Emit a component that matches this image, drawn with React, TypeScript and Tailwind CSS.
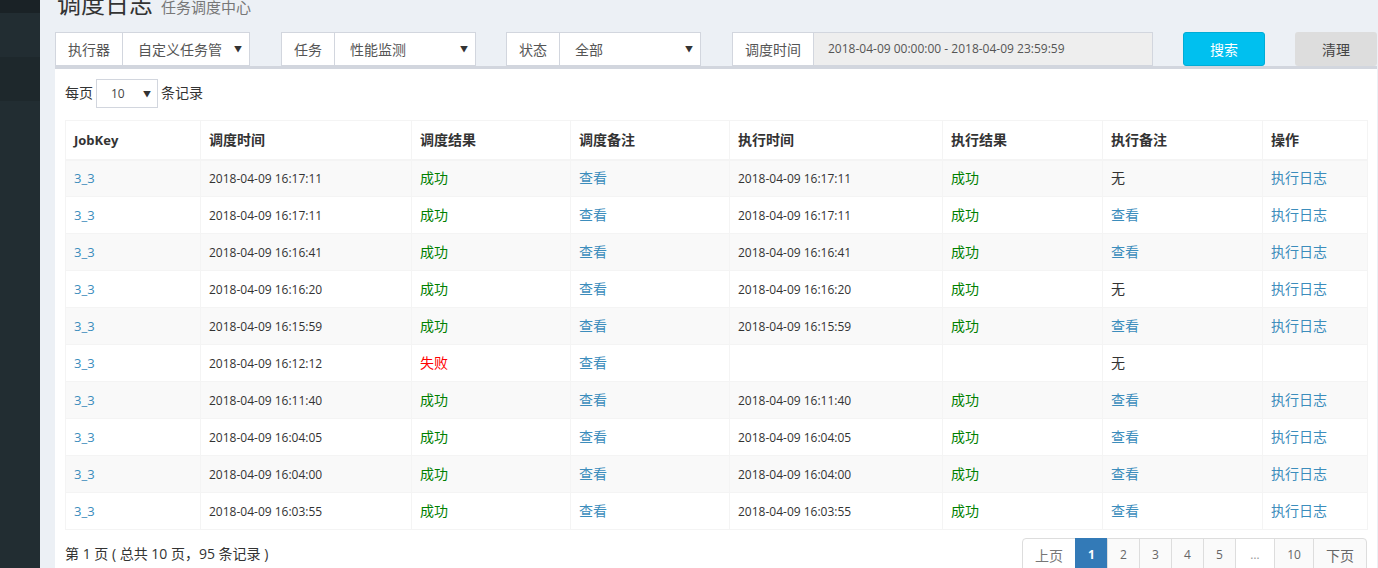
import React from 'react';

interface LogRow {
  triggerTime: string;
  ok: boolean;
  handleTime: string;
  handleOk: boolean;
  handleMsg: boolean;
}

const rows: LogRow[] = [
  { triggerTime: '2018-04-09 16:17:11', ok: true, handleTime: '2018-04-09 16:17:11', handleOk: true, handleMsg: false },
  { triggerTime: '2018-04-09 16:17:11', ok: true, handleTime: '2018-04-09 16:17:11', handleOk: true, handleMsg: true },
  { triggerTime: '2018-04-09 16:16:41', ok: true, handleTime: '2018-04-09 16:16:41', handleOk: true, handleMsg: true },
  { triggerTime: '2018-04-09 16:16:20', ok: true, handleTime: '2018-04-09 16:16:20', handleOk: true, handleMsg: false },
  { triggerTime: '2018-04-09 16:15:59', ok: true, handleTime: '2018-04-09 16:15:59', handleOk: true, handleMsg: true },
  { triggerTime: '2018-04-09 16:12:12', ok: false, handleTime: '', handleOk: false, handleMsg: false },
  { triggerTime: '2018-04-09 16:11:40', ok: true, handleTime: '2018-04-09 16:11:40', handleOk: true, handleMsg: true },
  { triggerTime: '2018-04-09 16:04:05', ok: true, handleTime: '2018-04-09 16:04:05', handleOk: true, handleMsg: true },
  { triggerTime: '2018-04-09 16:04:00', ok: true, handleTime: '2018-04-09 16:04:00', handleOk: true, handleMsg: true },
  { triggerTime: '2018-04-09 16:03:55', ok: true, handleTime: '2018-04-09 16:03:55', handleOk: true, handleMsg: true },
];

const Caret = () => <span className="text-[8px] leading-none text-[#333]">▼</span>;

const FilterSelect: React.FC<{ label: string; value: string; labelW: string; className?: string }> = ({ label, value, labelW, className }) => (
  <div className={`flex h-[34px] w-[195px] shrink-0 ${className ?? ''}`}>
    <div className={`flex ${labelW} shrink-0 items-center justify-center border border-[#d2d6de] bg-white text-[#555]`}>{label}</div>
    <div className="-ml-px flex flex-1 items-center justify-between border border-[#d2d6de] bg-white pl-[15px] pr-[7px] text-[#555]">
      <span>{value}</span>
      <Caret />
    </div>
  </div>
);

const th = 'h-[39px] border border-[#f4f4f4] border-b-2 px-2 py-0 text-left text-[14px] font-bold leading-5 text-[#333]';
const td = 'h-[37px] border border-[#f4f4f4] px-2 py-0 leading-5';
const num = 'text-[12px] text-[#333]';

const App: React.FC = () => {
  return (
    <div className="flex h-[568px] w-[1378px] overflow-hidden bg-[#ecf0f5] font-['Open_Sans','Noto_Sans_CJK_SC',sans-serif] text-[14px] text-[#333]">
      {/* sidebar */}
      <aside className="flex w-[40px] shrink-0 flex-col bg-[#222d32]">
        <div className="h-[13px] shrink-0 bg-[#1a2226]" />
        <div className="h-[44px] shrink-0" />
        <div className="h-[44px] shrink-0 bg-[#1e282c]" />
      </aside>

      <main className="flex min-w-0 flex-1 flex-col pl-[15px] pr-px">
        {/* header */}
        <div className="h-[32px] shrink-0">
          <h1 className="-mt-[8px] ml-[2px] flex items-baseline gap-[8px] leading-[24px]">
            <span className="text-[24px] text-[#333]">调度日志</span>
            <span className="text-[15px] text-[#777]">任务调度中心</span>
          </h1>
        </div>

        {/* filters */}
        <div className="flex h-[34px] shrink-0">
          <FilterSelect label="执行器" value="自定义任务管" labelW="w-[68px]" />
          <FilterSelect label="任务" value="性能监测" labelW="w-[54px]" className="ml-[31px]" />
          <FilterSelect label="状态" value="全部" labelW="w-[54px]" className="ml-[30px]" />
          <div className="ml-[31px] flex h-[34px] w-[421px] shrink-0">
            <div className="flex w-[82px] shrink-0 items-center justify-center border border-[#d2d6de] bg-white text-[#555]">调度时间</div>
            <div className="-ml-px flex flex-1 items-center border border-[#d2d6de] bg-[#eee] pl-[14px] text-[12px] text-[#555]">
              2018-04-09 00:00:00 - 2018-04-09 23:59:59
            </div>
          </div>
          <button className="ml-[30px] h-[34px] w-[82px] shrink-0 rounded-[3px] border border-[#00acd6] bg-[#00c0ef] text-white">搜索</button>
          <button className="ml-[30px] h-[34px] w-[82px] shrink-0 rounded-[3px] bg-[#ddd] text-[#444]">清理</button>
        </div>

        {/* box */}
        <div className="flex flex-1 flex-col border-t-[3px] border-[#d2d6de] bg-white px-[10px] pt-[10px]">
          <div className="mb-[12px] flex h-[29px] shrink-0 items-center gap-[3px]">
            <span className="-mt-[2px]">每页</span>
            <div className="flex h-[29px] w-[62px] items-center justify-between border border-[#d2d6de] pl-[14px] pr-[6px]">
              <span className="text-[12px] text-[#444]">10</span>
              <Caret />
            </div>
            <span className="-mt-[2px]">条记录</span>
          </div>

          <table className="w-[1302px] shrink-0 table-fixed border-collapse border border-[#f4f4f4]">
            <colgroup>
              <col className="w-[135px]" />
              <col className="w-[211px]" />
              <col className="w-[159px]" />
              <col className="w-[159px]" />
              <col className="w-[213px]" />
              <col className="w-[160px]" />
              <col className="w-[160px]" />
              <col className="w-[105px]" />
            </colgroup>
            <thead>
              <tr>
                <th className={th}><span className="text-[13px]">JobKey</span></th>
                <th className={th}>调度时间</th>
                <th className={th}>调度结果</th>
                <th className={th}>调度备注</th>
                <th className={th}>执行时间</th>
                <th className={th}>执行结果</th>
                <th className={th}>执行备注</th>
                <th className={th}>操作</th>
              </tr>
            </thead>
            <tbody>
              {rows.map((r, i) => (
                <tr key={i} className={i % 2 === 0 ? 'bg-[#f9f9f9]' : 'bg-white'}>
                  <td className={td}><span className="text-[13px] text-[#3c8dbc]">3_3</span></td>
                  <td className={td}><span className={num}>{r.triggerTime}</span></td>
                  <td className={td}>
                    {r.ok ? <span className="text-[#008000]">成功</span> : <span className="text-[#ff0000]">失败</span>}
                  </td>
                  <td className={td}><span className="text-[#3c8dbc]">查看</span></td>
                  <td className={td}><span className={num}>{r.handleTime}</span></td>
                  <td className={td}>{r.handleOk && <span className="text-[#008000]">成功</span>}</td>
                  <td className={td}>
                    {r.handleMsg ? <span className="text-[#3c8dbc]">查看</span> : <span className="text-[#333]">无</span>}
                  </td>
                  <td className={td}>{r.handleOk && <span className="text-[#3c8dbc]">执行日志</span>}</td>
                </tr>
              ))}
            </tbody>
          </table>

          <div className="mt-[8px] flex shrink-0 items-start justify-between">
            <div className="pt-[5px]">第 1 页 ( 总共 10 页，95 条记录 )</div>
            <div className="flex h-[34px]">
              <span className="flex w-[54px] items-center justify-center rounded-l-[4px] border border-[#ddd] bg-white text-[#777]">上页</span>
              {['1', '2', '3', '4', '5'].map((p) => (
                <span
                  key={p}
                  className={
                    p === '1'
                      ? '-ml-px flex w-[33px] items-center justify-center border border-[#337ab7] bg-[#337ab7] text-[12px] font-bold text-white'
                      : '-ml-px flex w-[33px] items-center justify-center border border-[#ddd] bg-[#fafafa] text-[12px] text-[#666]'
                  }
                >
                  {p}
                </span>
              ))}
              <span className="-ml-px flex w-[40px] items-center justify-center border border-[#ddd] bg-white text-[12px] text-[#999]">…</span>
              <span className="-ml-px flex w-[40px] items-center justify-center border border-[#ddd] bg-[#fafafa] text-[12px] text-[#666]">10</span>
              <span className="-ml-px flex w-[54px] items-center justify-center rounded-r-[4px] border border-[#ddd] bg-[#fafafa] text-[#666]">下页</span>
            </div>
          </div>
        </div>
      </main>
    </div>
  );
};

export default App;
